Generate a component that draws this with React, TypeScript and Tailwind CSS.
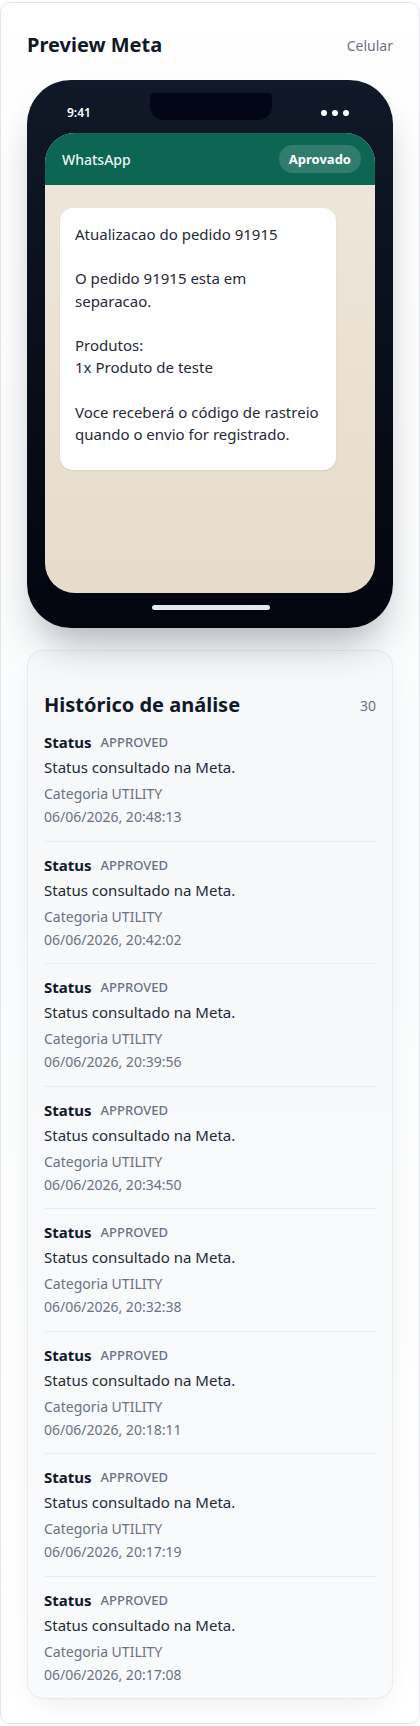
const history = [
  '06/06/2026, 20:48:13',
  '06/06/2026, 20:42:02',
  '06/06/2026, 20:39:56',
  '06/06/2026, 20:34:50',
  '06/06/2026, 20:32:38',
  '06/06/2026, 20:18:11',
  '06/06/2026, 20:17:19',
  '06/06/2026, 20:17:08',
]

const message = `Atualizacao do pedido 91915

O pedido 91915 esta em
separacao.

Produtos:
1x Produto de teste

Voce receberá o código de rastreio
quando o envio for registrado.`

function PhonePreview() {
  return (
    <div className="relative mt-[21px] h-[548px] rounded-[44px] bg-gradient-to-b from-[#111827] to-[#03060f] px-[18px] pt-[53px] pb-[35px] shadow-[0_24px_40px_-12px_rgba(15,23,42,0.35)]">
      <div className="absolute left-[123px] top-[13px] h-[27px] w-[122px] rounded-b-[14px] rounded-t-[4px] bg-[#020617]" />
      <div className="absolute left-[40px] right-[44px] top-[24px] flex items-center justify-between">
        <span className="text-[12px] font-semibold leading-[18px] text-white">9:41</span>
        <div className="flex gap-[5px]">
          <span className="h-[6px] w-[6px] rounded-full bg-white" />
          <span className="h-[6px] w-[6px] rounded-full bg-white" />
          <span className="h-[6px] w-[6px] rounded-full bg-white" />
        </div>
      </div>
      <div className="flex h-full flex-col overflow-hidden rounded-[30px] bg-gradient-to-b from-[#eee7db] to-[#e7dccb]">
        <div className="flex h-[52px] shrink-0 items-center justify-between bg-[#0d6654] pl-[17px] pr-[14px]">
          <span className="text-[14px] font-medium text-white/95">WhatsApp</span>
          <span className="rounded-full bg-white/15 px-[10px] py-[4px] text-[13px] font-bold leading-[20px] text-white">Aprovado</span>
        </div>
        <div className="px-[15px] pt-[23px]">
          <div className="w-[276px] whitespace-pre rounded-[13px] bg-white px-[15px] pt-[15px] pb-[25px] text-[15px] leading-[22.2px] text-[#1f2937] shadow-[0_1px_2px_rgba(0,0,0,0.08)]">
            {message}
          </div>
        </div>
      </div>
      <div className="absolute bottom-[18px] left-[125px] h-[5px] w-[118px] rounded-full bg-slate-200" />
    </div>
  )
}

export default function App() {
  return (
    <div className="bg-white pt-[2px] font-['Noto_Sans','Open_Sans',sans-serif]">
      <div className="h-[1722px] rounded-[10px] border border-[#e3e5ea] bg-gradient-to-b from-white via-[#fafbfc] to-white px-[26px] pt-[28px]">
        <div className="flex items-center justify-between">
          <h2 className="text-[20px] font-bold leading-[28px] text-[#111827]">Preview Meta</h2>
          <span className="text-[14px] text-gray-500">Celular</span>
        </div>

        <PhonePreview />

        <div className="mt-[22px] rounded-2xl border border-slate-200/80 bg-gradient-to-b from-[#f7f8fa] to-[#f9fafb] px-4 pt-[40px] shadow-[0_10px_30px_-12px_rgba(15,23,42,0.12)]">
          <div className="flex h-7 items-center justify-between">
            <h3 className="text-[20px] font-bold leading-[28px] text-[#111827]">Histórico de análise</h3>
            <span className="text-[14px] text-gray-500">30</span>
          </div>
          <ul>
            {history.map((date, i) => (
              <li
                key={date}
                className={`py-[13.25px] ${i < history.length - 1 ? 'border-b border-slate-200/70' : ''}`}
              >
                <div className="flex h-5 items-center gap-[9px] overflow-hidden">
                  <span className="text-[15px] font-bold leading-[20px] text-[#111827]">Status</span>
                  <span className="text-[13px] font-medium uppercase leading-[20px] text-gray-500">APPROVED</span>
                </div>
                <p className="mt-1 h-[22px] text-[15px] leading-[22px] text-[#1f2937]">Status consultado na Meta.</p>
                <p className="mt-[6px] h-5 text-[14px] leading-[20px] text-gray-500">Categoria UTILITY</p>
                <p className="mt-[3px] h-5 text-[14px] leading-[20px] text-gray-500">{date}</p>
              </li>
            ))}
          </ul>
        </div>
      </div>
    </div>
  )
}
